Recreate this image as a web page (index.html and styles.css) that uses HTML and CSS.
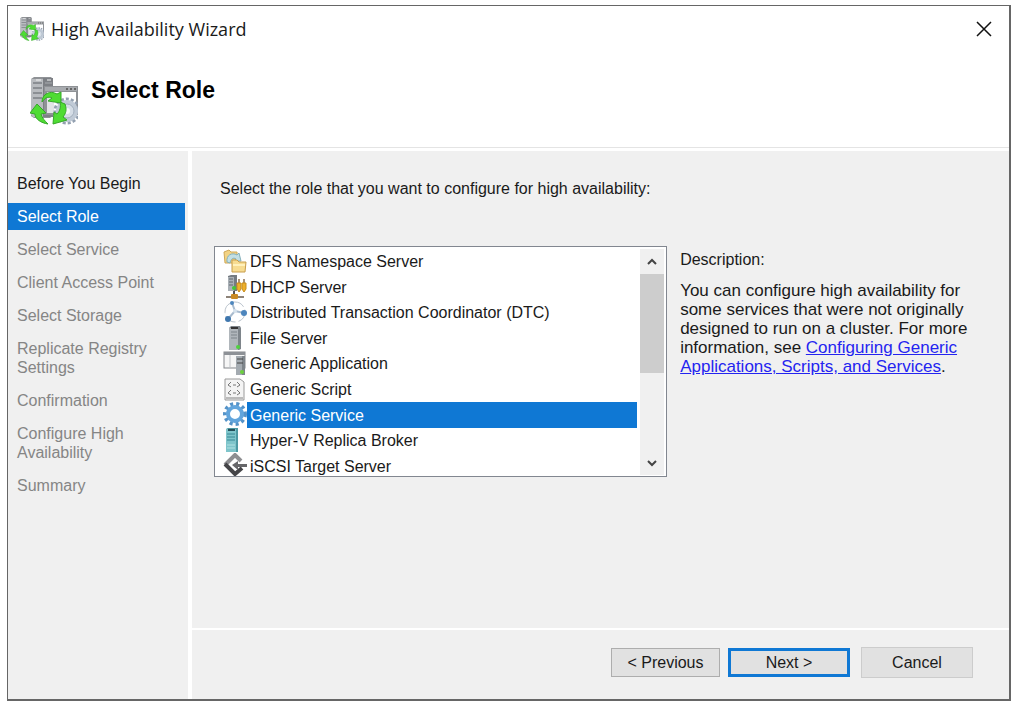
FILE: index.html
```html
<!DOCTYPE html>
<html lang="en">
<head>
  <meta charset="UTF-8">
  <meta name="viewport" content="width=device-width, initial-scale=1.0">
  <title>High Availability Wizard</title>
  <link rel="stylesheet" href="styles.css">
</head>
<body>
  <div class="window">

    <!-- Title bar and page heading -->
    <header class="header">
      <div class="titlebar">
        <svg class="titlebar-icon" viewBox="0 0 48 48" aria-hidden="true"><use href="#icon-cluster"/></svg>
        <span class="titlebar-text">High Availability Wizard</span>
        <button class="close" type="button" aria-label="Close">
          <svg width="16" height="16" viewBox="0 0 16 16"><path d="M1 1l14 14M15 1L1 15" stroke="#111" stroke-width="1.5"/></svg>
        </button>
      </div>
      <div class="heading">
        <svg class="heading-icon" viewBox="0 0 48 48" aria-hidden="true">
          <g id="icon-cluster">
            <path d="M1 2l3-2h17l2 2v37l-3 2H4l-3-2z" fill="#8f9296"/>
            <path d="M1 2h12v38H3l-2-2z" fill="#b9bcc0"/>
            <path d="M13 1h10v39H13z" fill="#7d8085"/>
            <path d="M3 6h9M3 11h9M3 16h9M3 21h9" stroke="#8b8f94" stroke-width="2"/>
            <path d="M6 3h5M17 3h4" stroke="#f4f4f4" stroke-width="1"/>
            <path d="M15 6h7" stroke="#a9acb0" stroke-width="1"/>
            <rect x="14" y="9" width="34" height="29" fill="#8f9296"/>
            <rect x="15" y="10" width="32" height="4" fill="#a8abaf"/>
            <path d="M36 12h2M40 12h2M44 12h2" stroke="#666" stroke-width="2"/>
            <rect x="17" y="15" width="29" height="21" fill="#fff"/>
            <rect x="17" y="15" width="7" height="21" fill="#e2e4e6"/>
            <circle cx="37" cy="34" r="12" fill="none" stroke="#93a0b0" stroke-width="3" stroke-dasharray="3 2"/>
            <circle cx="37" cy="34" r="11" fill="#c0cad6"/>
            <circle cx="37" cy="34" r="7" fill="#d5dde6" stroke="#a3b0be"/>
            <circle cx="37" cy="34" r="3" fill="#f6f8fa"/>
            <path d="M12 25C12 17 20 13 27 17l4-2v11l-13-2 4-3c-4-2-7 0-10 4z" fill="#4fdc33" stroke="#35a828"/>
            <path d="M7 27l9 9-5 1c1 4 4 7 7 10-7-1-13-5-13-10l-5-1z" fill="#4fdc33" stroke="#35a828"/>
            <path d="M30 25l5 2c2 6 1 9-2 13l4 3-14 4 1-12 3 2c3-3 4-7 3-12z" fill="#4fdc33" stroke="#35a828"/>
          </g>
        </svg>
        <h1>Select Role</h1>
      </div>
    </header>

    <div class="body">

      <!-- Wizard steps -->
      <nav class="steps" aria-label="Wizard steps">
        <ol>
          <li class="done">Before You Begin</li>
          <li class="current" aria-current="step">Select Role</li>
          <li>Select Service</li>
          <li>Client Access Point</li>
          <li>Select Storage</li>
          <li>Replicate Registry Settings</li>
          <li>Confirmation</li>
          <li>Configure High Availability</li>
          <li>Summary</li>
        </ol>
      </nav>

      <main class="content">
        <p class="intro" id="intro">Select the role that you want to configure for high availability:</p>

        <div class="columns">
          <!-- Role list -->
          <div class="listbox" role="radiogroup" aria-labelledby="intro">
            <div class="roles">
              <label class="role">
                <input type="radio" name="role">
                <svg viewBox="0 0 24 24">
                  <path d="M1 3l5-2 2 2h6v11H2z" fill="#f2d384" stroke="#cfa858"/>
                  <path d="M4 13C3 6 9 3 14 6l2-2 2 8h-7l2-2c-3-2-5 0-6 4z" fill="#c3dfe4" stroke="#85b0bb"/>
                  <path d="M9 11h5l2 2h7l-1 10H9z" fill="#f7dc91" stroke="#c79d4c"/>
                  <path d="M10 16h12" stroke="#fff1bd" stroke-width="2"/>
                </svg>
                <span>DFS Namespace Server</span>
              </label>
              <label class="role">
                <input type="radio" name="role">
                <svg viewBox="0 0 24 24">
                  <path d="M5 1l3-1h6v16H5z" fill="#757b82"/>
                  <path d="M5 2h6v14H5z" fill="#a9b0b6"/>
                  <path d="M6 4h4M6 7h4M6 10h4" stroke="#626970"/>
                  <circle cx="11" cy="13" r="2" fill="#42c738"/>
                  <path d="M16 4v7M21 4v7" stroke="#a79279" stroke-width="2"/>
                  <path d="M14 8h4v6l-2 3-2-3zM19 8h4v6l-2 3-2-3z" fill="#eeb02b" stroke="#c98d1c"/>
                  <path d="M11 16v4" stroke="#555" stroke-width="2"/>
                  <path d="M3 22h18" stroke="#8d8379" stroke-width="2"/>
                  <rect x="8" y="19" width="7" height="5" rx="1" fill="#c98a24"/>
                </svg>
                <span>DHCP Server</span>
              </label>
              <label class="role">
                <input type="radio" name="role">
                <svg viewBox="0 0 24 24">
                  <circle cx="12" cy="12" r="10" fill="none" stroke="#bcc5ce" stroke-dasharray="12 3"/>
                  <path d="M9 3l3 8-7 8M12 11l9 2" fill="none" stroke="#a9bccf" stroke-width="2"/>
                  <circle cx="9" cy="3" r="2" fill="#4d86bd"/>
                  <circle cx="12" cy="11" r="2" fill="#d6e2ec"/>
                  <circle cx="5" cy="19" r="3" fill="#3f77ae"/>
                  <circle cx="21" cy="13" r="3" fill="#4d86bd"/>
                </svg>
                <span>Distributed Transaction Coordinator (DTC)</span>
              </label>
              <label class="role">
                <input type="radio" name="role">
                <svg viewBox="0 0 24 24">
                  <path d="M6 2l2-2h9l1 2v21l-2 1H6z" fill="#7e858b"/>
                  <path d="M6 2h9v22H6z" fill="#b0b6bb"/>
                  <path d="M8 2h7" stroke="#333" stroke-width="2"/>
                  <path d="M8 6h6M8 9h6M8 12h6" stroke="#7d848a"/>
                  <circle cx="15" cy="21" r="2" fill="#4fd33e"/>
                </svg>
                <span>File Server</span>
              </label>
              <label class="role">
                <input type="radio" name="role">
                <svg viewBox="0 0 24 24">
                  <rect x="1" y="1" width="21" height="16" fill="#f6f6f6" stroke="#85888c"/>
                  <rect x="1" y="1" width="21" height="3" fill="#8d9196"/>
                  <path d="M7 4v13" stroke="#bfc2c6"/>
                  <path d="M13 5h9v19h-9z" fill="#a4abb1"/>
                  <path d="M19 5h3v19h-3z" fill="#7e858b"/>
                  <path d="M14 8h6M14 12h6" stroke="#444"/>
                  <circle cx="19" cy="21" r="2" fill="#6cd13e"/>
                </svg>
                <span>Generic Application</span>
              </label>
              <label class="role">
                <input type="radio" name="role">
                <svg viewBox="0 0 24 24">
                  <path d="M2 2h15l4 3v18H2z" fill="#f4f4f4" stroke="#9a9a9a"/>
                  <path d="M8 5L5 8l3 2M14 5l3 3-3 2M10 8h3M8 13l-3 3 3 2M14 13l3 3-3 2M10 16h3" fill="none" stroke="#777"/>
                  <path d="M3 21h17" stroke="#bbb" stroke-width="2"/>
                </svg>
                <span>Generic Script</span>
              </label>
              <label class="role">
                <input type="radio" name="role" checked>
                <svg viewBox="0 0 24 24">
                  <circle cx="12" cy="12" r="10" fill="none" stroke="#5593c8" stroke-width="4" stroke-dasharray="3 3"/>
                  <circle cx="12" cy="12" r="7" fill="#fff" stroke="#62a5dc" stroke-width="4"/>
                </svg>
                <span>Generic Service</span>
              </label>
              <label class="role">
                <input type="radio" name="role">
                <svg viewBox="0 0 24 24">
                  <path d="M3 1l2-1h10v24H3z" fill="#4c99a3"/>
                  <path d="M3 1h10v23H3z" fill="#7fc5cb"/>
                  <path d="M5 2h7" stroke="#244f59" stroke-width="2"/>
                  <path d="M4 6h8M4 9h8M4 12h8" stroke="#388894"/>
                  <path d="M4 17h8M4 20h8" stroke="#b3e2e3"/>
                </svg>
                <span>Hyper-V Replica Broker</span>
              </label>
              <label class="role">
                <input type="radio" name="role">
                <svg viewBox="0 0 24 24">
                  <path d="M18 8l-6-6L2 12" fill="none" stroke="#8e8e91" stroke-width="4"/>
                  <path d="M2 11l10 10 7-6" fill="none" stroke="#454548" stroke-width="4"/>
                  <path d="M9 12l6-4v3h9v3h-9v3z" fill="#666669"/>
                </svg>
                <span>iSCSI Target Server</span>
              </label>
            </div>
            <div class="scrollbar">
              <button type="button" aria-label="Scroll up">
                <svg width="10" height="8" viewBox="0 0 10 8"><path d="M1 6l4-4 4 4" fill="none" stroke="#444" stroke-width="2"/></svg>
              </button>
              <div class="track"><div class="thumb"></div></div>
              <button type="button" aria-label="Scroll down">
                <svg width="10" height="8" viewBox="0 0 10 8"><path d="M1 2l4 4 4-4" fill="none" stroke="#444" stroke-width="2"/></svg>
              </button>
            </div>
          </div>

          <!-- Description of the selected role -->
          <section class="description">
            <h2>Description:</h2>
            <p>You can configure high availability for some services that were not originally designed to run on a cluster. For more information, see <a href="#">Configuring Generic Applications, Scripts, and Services</a>.</p>
          </section>
        </div>

        <footer class="footer">
          <button class="btn" type="button">&lt; Previous</button>
          <button class="btn btn-default" type="button">Next &gt;</button>
          <button class="btn btn-cancel" type="button">Cancel</button>
        </footer>
      </main>
    </div>
  </div>
</body>
</html>
```
FILE: styles.css
```css
* {
  box-sizing: border-box;
}

body {
  margin: 0;
  padding: 5px 11px 6px 7px;
  min-height: 100vh;
  display: flex;
  background: #fff;
  color: #1a1a1a;
  font-family: "Liberation Sans", Arial, sans-serif;
  font-size: 16px;
  line-height: 19px;
}

button {
  font: inherit;
  color: inherit;
  border-radius: 0;
}

h1, h2, p, ol {
  margin: 0;
  padding: 0;
}

.window {
  flex: 1;
  display: flex;
  flex-direction: column;
  border: 2px solid #666;
  border-left-width: 1px;
  border-top-width: 1px;
}

/* header */
.header {
  height: 145px;
  padding-bottom: 3px;
  background: #fff;
}

.titlebar {
  display: flex;
  align-items: center;
  height: 46px;
  padding: 0 17px 0 12px;
}

.titlebar-icon {
  width: 24px;
  height: 26px;
  margin-right: 7px;
}

.titlebar-text {
  flex: 1;
  font-family: "Open Sans", "Segoe UI", sans-serif;
  font-size: 18px;
  line-height: 24px;
}

.close {
  display: flex;
  padding: 0;
  border: none;
  background: none;
}

.heading {
  display: flex;
  align-items: flex-start;
  gap: 13px;
  height: 96px;
  padding: 25px 22px 0;
  border-bottom: 1px solid #e4e4e4;
}

.heading-icon {
  width: 48px;
  height: 48px;
}

.heading h1 {
  font-size: 23px;
  line-height: 26px;
  color: #000;
}

/* body */
.body {
  flex: 1;
  display: flex;
  gap: 4px;
}

.steps {
  width: 180px;
  padding: 19px 3px 0 0;
  background: #f0f0f0;
}

.steps ol {
  display: flex;
  flex-direction: column;
  gap: 6px;
  list-style: none;
}

.steps li {
  padding: 4px 24px 4px 9px;
  color: #858585;
}

.steps .done {
  color: #1a1a1a;
}

.steps .current {
  background: #0f78d4;
  color: #fff;
}

.content {
  flex: 1;
  display: flex;
  flex-direction: column;
  background: #f0f0f0;
}

.intro {
  padding: 28px 28px 0;
}

.columns {
  flex: 1;
  display: flex;
  align-items: flex-start;
  gap: 13px;
  padding: 48px 0 20px 22px;
}

/* role list */
.listbox {
  display: flex;
  width: 57%;
  height: 231px;
  padding: 2px 2px 0 8px;
  overflow: hidden;
  border: 1px solid #828790;
  background: #fff;
}

.roles {
  flex: 1;
  display: grid;
  grid-auto-rows: 1fr;
  height: 230px;
  margin-right: 3px;
}

.role {
  display: flex;
  align-items: stretch;
  white-space: nowrap;
}

.role input {
  position: absolute;
  opacity: 0;
}

.role svg {
  width: 24px;
  height: 24px;
}

.role span {
  flex: 1;
  display: flex;
  align-items: center;
  padding-left: 3px;
}

.role input:checked ~ span {
  background: #0f78d4;
  color: #fff;
}

.scrollbar {
  display: flex;
  flex-direction: column;
  width: 24px;
  height: 226px;
  background: #f0f0f0;
}

.scrollbar button {
  display: flex;
  align-items: center;
  justify-content: center;
  height: 25px;
  padding: 0;
  border: none;
  background: none;
}

.track {
  flex: 1;
}

.thumb {
  height: 99px;
  background: #cdcdcd;
}

/* description */
.description {
  flex: 1;
  padding: 4px 40px 0 0;
}

.description h2 {
  margin-bottom: 12px;
  font-size: 16px;
  font-weight: normal;
}

.description p {
  font-size: 17px;
}

.description a {
  color: #2424f0;
}

/* buttons */
.footer {
  display: flex;
  align-items: center;
  justify-content: flex-end;
  gap: 8px;
  height: 71px;
  padding: 0 36px 4px 0;
  border-top: 2px solid #fff;
}

.btn {
  width: 109px;
  height: 29px;
  padding: 0;
  border: 1px solid #adadad;
  background: #e1e1e1;
}

.btn-default {
  width: 122px;
  border: 3px solid #0f78d4;
}

.btn-cancel {
  width: 112px;
  height: 31px;
  margin-left: 3px;
  border-color: #ccc;
}
```
